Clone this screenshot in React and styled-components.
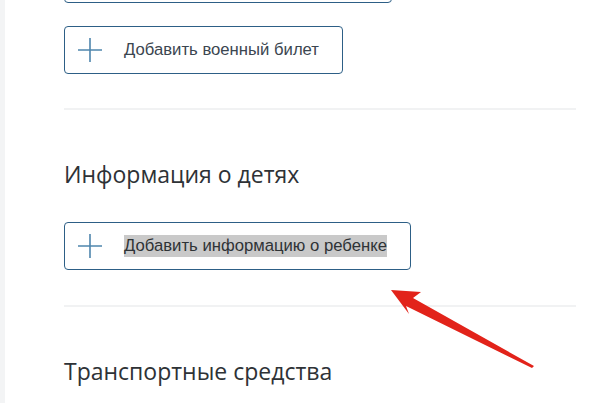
import React from "react";
import styled, { createGlobalStyle } from "styled-components";

const GlobalStyle = createGlobalStyle`
  html, body {
    margin: 0;
    padding: 0;
    background: #ffffff;
    overflow: hidden;
  }
`;

const Page = styled.div`
  position: relative;
  display: flex;
  width: 600px;
  height: 403px;
  overflow: hidden;
  background: #ffffff;
`;

const SideStrip = styled.div`
  width: 5px;
  flex-shrink: 0;
  background: #f3f4f5;
`;

const Content = styled.div`
  flex: 1;
  display: flex;
  flex-direction: column;
  align-items: flex-start;
  padding: 0 24px 0 59px;
  margin-top: -45px;
`;

const AddButton = styled.button`
  display: flex;
  align-items: center;
  box-sizing: border-box;
  width: ${(p) => p.width}px;
  height: 48px;
  margin-top: ${(p) => p.top || 0}px;
  padding: 0 0 0 12px;
  border: 1px solid #2d5f86;
  border-radius: 4px;
  background: #ffffff;
  cursor: pointer;
  font-family: "Liberation Sans", Arial, sans-serif;
  font-size: 16.7px;
  color: #3b4650;
`;

const PlusIcon = () => (
  <svg width="26" height="26" viewBox="0 0 26 26">
    <path d="M13 1 V25 M1 13 H25" stroke="#4f86ad" strokeWidth="1.6" fill="none" />
  </svg>
);

const Label = styled.span`
  margin-left: 21px;
  padding: 1px 0;
  background: ${(p) => (p.selected ? "#c9c9c9" : "transparent")};
  color: ${(p) => (p.selected ? "#2f3336" : "#3b4650")};
  white-space: nowrap;
`;

const Divider = styled.div`
  align-self: stretch;
  height: 2px;
  margin-top: ${(p) => p.top}px;
  background: #f1f2f3;
`;

const Heading = styled.h2`
  margin: ${(p) => p.top}px 0 0;
  font-family: "Open Sans", "Noto Sans", sans-serif;
  font-weight: 400;
  font-size: 23px;
  line-height: 30px;
  color: #2e3236;
`;

const Arrow = styled.svg`
  position: absolute;
  left: 0;
  top: 0;
  pointer-events: none;
`;

export default function App() {
  return (
    <>
      <GlobalStyle />
      <Page>
        <SideStrip />
        <Content>
          <AddButton width={328} />
          <AddButton width={279} top={23}>
            <PlusIcon />
            <Label>Добавить военный билет</Label>
          </AddButton>
          <Divider top={34} />
          <Heading top={49}>Информация о детях</Heading>
          <AddButton width={347} top={33}>
            <PlusIcon />
            <Label selected>Добавить информацию о ребенке</Label>
          </AddButton>
          <Divider top={35} />
          <Heading top={49}>Транспортные средства</Heading>
        </Content>
        <Arrow width="600" height="403">
          <polygon
            points="391,290 421,292 413,298 534,366 532,368 406,306 409,314"
            fill="#e2231a"
          />
        </Arrow>
      </Page>
    </>
  );
}
